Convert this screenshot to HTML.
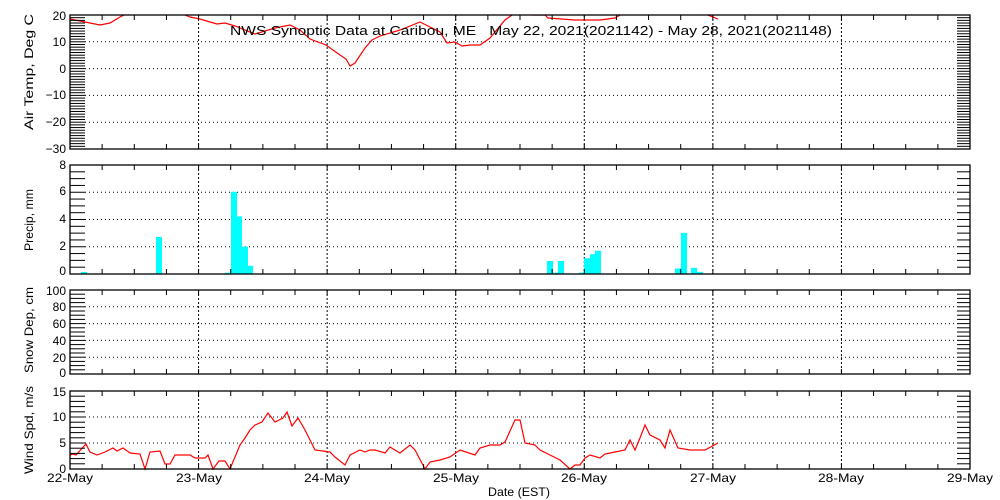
<!DOCTYPE html>
<html><head><meta charset="utf-8"><style>
html,body{margin:0;padding:0;background:#fff;}
svg{display:block;font-family:"Liberation Sans",sans-serif;}
text{font-size:12px;fill:#000;white-space:pre;}
</style></head><body>
<svg id="s" width="1000" height="500" viewBox="0 0 1000 500" xmlns="http://www.w3.org/2000/svg">
<g id="grid"></g>
<g id="data"></g>
<g id="ax" stroke="#000" stroke-width="1.3" fill="none"></g>
<text x="230" y="35" style="font-size:13px" textLength="602" lengthAdjust="spacingAndGlyphs" xml:space="preserve">NWS Synoptic Data at Caribou, ME   May 22, 2021(2021142) - May 28, 2021(2021148)</text>
<g text-anchor="end">
<text x="66" y="20">20</text><text x="66" y="46">10</text><text x="66" y="73">0</text><text x="66" y="99">−10</text><text x="66" y="126">−20</text><text x="66" y="153">−30</text>
<text x="66" y="169">8</text><text x="66" y="195">6</text><text x="66" y="223">4</text><text x="66" y="250">2</text><text x="66" y="275">0</text>
<text x="66" y="295">100</text><text x="66" y="311">80</text><text x="66" y="328">60</text><text x="66" y="345">40</text><text x="66" y="362">20</text><text x="66" y="377">0</text>
<text x="66" y="396">15</text><text x="66" y="421">10</text><text x="66" y="447">5</text><text x="66" y="473">0</text>
</g>
<g text-anchor="middle" style="font-size:13px">
<text transform="translate(33,72) rotate(-90)" textLength="116" lengthAdjust="spacingAndGlyphs">Air Temp, Deg C</text>
<text transform="translate(33,220) rotate(-90)" textLength="62" lengthAdjust="spacingAndGlyphs">Precip, mm</text>
<text transform="translate(33,330) rotate(-90)" textLength="86" lengthAdjust="spacingAndGlyphs">Snow Dep, cm</text>
<text transform="translate(33,430) rotate(-90)" textLength="88" lengthAdjust="spacingAndGlyphs">Wind Spd, m/s</text>
</g>
<g text-anchor="middle">
<text x="70" y="482" textLength="46" lengthAdjust="spacingAndGlyphs">22-May</text><text x="199" y="482" textLength="46" lengthAdjust="spacingAndGlyphs">23-May</text><text x="327" y="482" textLength="46" lengthAdjust="spacingAndGlyphs">24-May</text><text x="456" y="482" textLength="46" lengthAdjust="spacingAndGlyphs">25-May</text><text x="584" y="482" textLength="46" lengthAdjust="spacingAndGlyphs">26-May</text><text x="713" y="482" textLength="46" lengthAdjust="spacingAndGlyphs">27-May</text><text x="841" y="482" textLength="46" lengthAdjust="spacingAndGlyphs">28-May</text><text x="970" y="482" textLength="46" lengthAdjust="spacingAndGlyphs">29-May</text>
<text x="519" y="496" textLength="62" lengthAdjust="spacingAndGlyphs">Date (EST)</text>
</g>
</svg>
<script>
var NS="http://www.w3.org/2000/svg";
function el(p,t,a){var e=document.createElementNS(NS,t);for(var k in a)e.setAttribute(k,a[k]);document.getElementById(p).appendChild(e);return e;}
var X0=70,X1=970,D=(X1-X0)/7;
var panels=[
 {top:15,bot:149,min:-30,max:20,minor:1,major:10},
 {top:165,bot:274,min:0,max:8,minor:0.5,major:2},
 {top:290,bot:374,min:0,max:100,minor:5,major:20},
 {top:391,bot:469,min:0,max:15,minor:1,major:5}
];
panels.forEach(function(p){
 var sc=(p.bot-p.top)/(p.max-p.min);
 for(var v=p.min;v<=p.max+1e-6;v+=p.minor){
  var y=p.bot-(v-p.min)*sc;
  var isM=Math.abs(v/p.major-Math.round(v/p.major))<1e-6;
  el("ax","line",{x1:X0,x2:X0+15,y1:y,y2:y,"stroke-width":1});
  el("ax","line",{x1:X1-13,x2:X1,y1:y,y2:y,"stroke-width":1});
  if(isM&&v>p.min&&v<p.max) el("grid","line",{x1:X0+15,x2:X1-13,y1:y,y2:y,stroke:"#000","stroke-width":1,"stroke-dasharray":"1,3"});
 }
 for(var k=1;k<28;k++){var x=X0+k*D/4;
  el("ax","line",{x1:x,x2:x,y1:p.top,y2:p.top+5,"stroke-width":1});
  el("ax","line",{x1:x,x2:x,y1:p.bot,y2:p.bot-5,"stroke-width":1});
  if(k%4==0) el("grid","line",{x1:x,x2:x,y1:p.top,y2:p.bot,stroke:"#000","stroke-width":1,"stroke-dasharray":"2,2"});
 }
 el("ax","rect",{x:X0,y:p.top,width:X1-X0,height:p.bot-p.top});
});
var bars=[[81,87,0.15],[156,162,2.7],[225,231,0.1],[231,237,6],[237,242,4.2],[242,248,2],[248,253,0.6],[547,553,0.95],[553,558,0.1],[558,564,0.95],[579,584,0.1],[584,590,1.15],[590,595,1.45],[595,601,1.7],[675,681,0.4],[681,687,3],[691,697,0.45],[697,703,0.15]];
bars.forEach(function(b){var h=b[2]*13.7;el("data","rect",{x:b[0],y:274-h,width:b[1]-b[0],height:h,fill:"#00ffff"});});
var temp=[[70,19],[85,22],[100,25],[110,23],[120,17],[128,13],[180,13],[190,17],[200,19],[210,22],[217,24],[225,23],[235,26],[255,34],[275,28],[290,25],[300,30],[310,39],[326,45],[340,55],[346,59],[350,66],[355,63],[365,48],[372,40],[380,36],[400,30],[420,22],[440,32],[447,43],[455,42],[462,46],[470,45],[480,45],[490,38],[505,20],[512,15],[517,12],[528,12],[533,15],[545,15],[548,18],[575,20],[600,20],[615,18],[620,15],[625,12],[695,12],[700,15],[705,14],[718,19]];
var wind=[[70,455],[73,454],[76,455],[86,444],[90,452],[97,455],[105,452],[113,448],[117,451],[123,448],[130,453],[140,454],[145,469],[150,452],[160,451],[165,464],[170,464],[175,455],[190,455],[195,458],[205,458],[208,455],[213,469],[219,461],[225,461],[230,469],[240,445],[245,438],[250,430],[255,425],[262,422],[268,413],[275,422],[283,418],[287,412],[292,426],[298,418],[305,430],[315,450],[330,452],[335,457],[345,465],[350,455],[360,450],[365,452],[370,450],[375,450],[385,453],[390,447],[400,453],[410,445],[415,450],[425,469],[430,462],[440,460],[450,457],[460,450],[475,455],[480,448],[490,445],[500,445],[505,442],[515,420],[520,420],[525,443],[535,445],[540,450],[550,455],[560,460],[570,469],[575,465],[580,465],[585,458],[590,455],[600,458],[605,454],[615,452],[625,450],[630,440],[635,450],[640,438],[645,425],[650,435],[660,440],[665,448],[670,430],[678,448],[690,450],[705,450],[718,443]];
function pl(pts){return pts.map(function(p){return p[0]+","+p[1]}).join(" ");}
var cp=el("data","clipPath",{id:"c1"});
var r=document.createElementNS(NS,"rect");r.setAttribute("x",70);r.setAttribute("y",15);r.setAttribute("width",900);r.setAttribute("height",134);cp.appendChild(r);
el("data","polyline",{points:pl(temp),fill:"none",stroke:"#ff0000","stroke-width":1.2,"clip-path":"url(#c1)"});
el("data","polyline",{points:pl(wind),fill:"none",stroke:"#ff0000","stroke-width":1.2});
</script>
</body></html>
